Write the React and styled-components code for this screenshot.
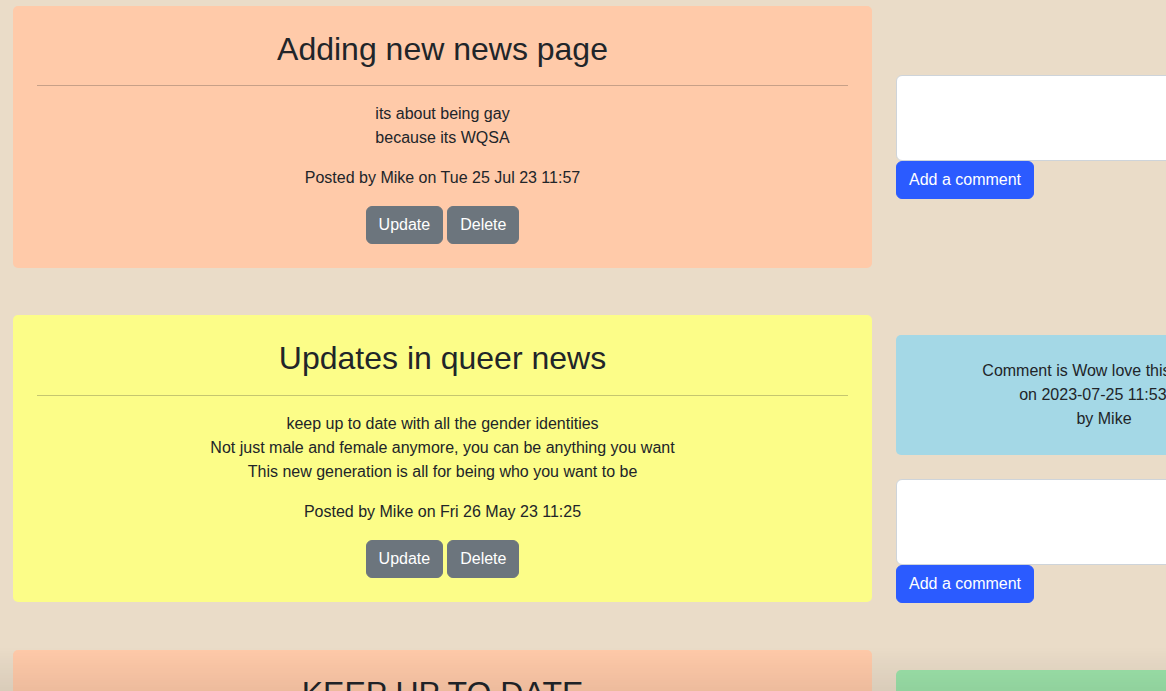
import React from "react";
import styled, { createGlobalStyle } from "styled-components";

const GlobalStyle = createGlobalStyle`
  html, body {
    margin: 0;
    padding: 0;
    overflow: hidden;
  }
  body {
    background: #eadcc8;
    font-family: "Liberation Sans", Arial, Helvetica, sans-serif;
    font-size: 16px;
    color: #212529;
  }
  * {
    box-sizing: border-box;
  }
`;

const Page = styled.div`
  padding: 6px 0 0 13px;
`;

const Feed = styled.div`
  display: flex;
  flex-direction: column;
  gap: 47px;
`;

const Row = styled.section`
  display: grid;
  grid-template-columns: 859px 416px;
  column-gap: 24px;
  align-items: center;
`;

const Card = styled.article`
  align-self: start;
  background: ${(p) => p.$bg};
  border-radius: 5px;
  padding: 24px;
  text-align: center;
`;

const Title = styled.h2`
  margin: 0;
  font-size: 32px;
  font-weight: 400;
  line-height: 1.2;
`;

const Rule = styled.hr`
  margin: 17px 0 16px;
  border: 0;
  border-top: 1px solid #212529;
  opacity: 0.25;
`;

const Text = styled.p`
  margin: 0 0 16px;
  line-height: 24px;
`;

const Actions = styled.div`
  display: flex;
  justify-content: center;
  gap: 4px;
`;

const Button = styled.button`
  height: 38px;
  padding: 6px 12px;
  border: 1px solid ${(p) => (p.$primary ? "#2b5bff" : "#6c757d")};
  border-radius: 6px;
  background: ${(p) => (p.$primary ? "#2b5bff" : "#6c757d")};
  color: #fff;
  font-family: inherit;
  font-size: 16px;
  line-height: 24px;
  cursor: pointer;
`;

const Side = styled.div`
  display: flex;
  flex-direction: column;
  align-items: flex-start;
`;

const Comment = styled.div`
  width: 100%;
  margin: 20px 0 24px;
  padding: 24px;
  background: ${(p) => p.$bg};
  border-radius: 5px;
  text-align: center;
  line-height: 24px;
`;

const Input = styled.textarea`
  display: block;
  width: 100%;
  height: 86px;
  border: 1px solid #ced4da;
  border-radius: 6px;
  background: #fff;
  resize: vertical;
  font-family: inherit;
  font-size: 16px;
`;

const Fade = styled.div`
  position: fixed;
  left: 0;
  right: 0;
  bottom: 0;
  height: 44px;
  pointer-events: none;
  background: linear-gradient(rgba(0, 0, 0, 0), rgba(0, 0, 0, 0.07));
`;

const posts = [
  {
    id: 1,
    title: "Adding new news page",
    bg: "#ffcaa9",
    body: ["its about being gay", "because its WQSA"],
    posted: "Posted by Mike on Tue 25 Jul 23 11:57",
    comments: [],
  },
  {
    id: 2,
    title: "Updates in queer news",
    bg: "#fcfd88",
    body: [
      "keep up to date with all the gender identities",
      "Not just male and female anymore, you can be anything you want",
      "This new generation is all for being who you want to be",
    ],
    posted: "Posted by Mike on Fri 26 May 23 11:25",
    comments: [
      {
        bg: "#a4d8e6",
        text: "Comment is Wow love this so cool",
        date: "on 2023-07-25 11:53:12",
        by: "by Mike",
      },
    ],
  },
  {
    id: 3,
    title: "KEEP UP TO DATE",
    bg: "#ffcaa9",
    body: [
      "stay tuned for the latest stories",
      "new articles are added every week",
      "check back soon for more",
    ],
    posted: "Posted by Mike on Thu 25 May 23 10:02",
    comments: [
      {
        bg: "#9ce2a9",
        text: "Comment is great news",
        date: "on 2023-07-25 11:54:40",
        by: "by Mike",
      },
    ],
  },
];

function Post({ post }) {
  return (
    <Row>
      <Card $bg={post.bg}>
        <Title>{post.title}</Title>
        <Rule />
        <Text>
          {post.body.map((line, i) => (
            <React.Fragment key={i}>
              {i > 0 && <br />}
              {line}
            </React.Fragment>
          ))}
        </Text>
        <Text>{post.posted}</Text>
        <Actions>
          <Button>Update</Button>
          <Button>Delete</Button>
        </Actions>
      </Card>
      <Side>
        {post.comments.map((c, i) => (
          <Comment key={i} $bg={c.bg}>
            {c.text}
            <br />
            {c.date}
            <br />
            {c.by}
          </Comment>
        ))}
        <Input />
        <Button $primary>Add a comment</Button>
      </Side>
    </Row>
  );
}

export default function App() {
  return (
    <>
      <GlobalStyle />
      <Page>
        <Feed>
          {posts.map((p) => (
            <Post key={p.id} post={p} />
          ))}
        </Feed>
      </Page>
      <Fade />
    </>
  );
}
